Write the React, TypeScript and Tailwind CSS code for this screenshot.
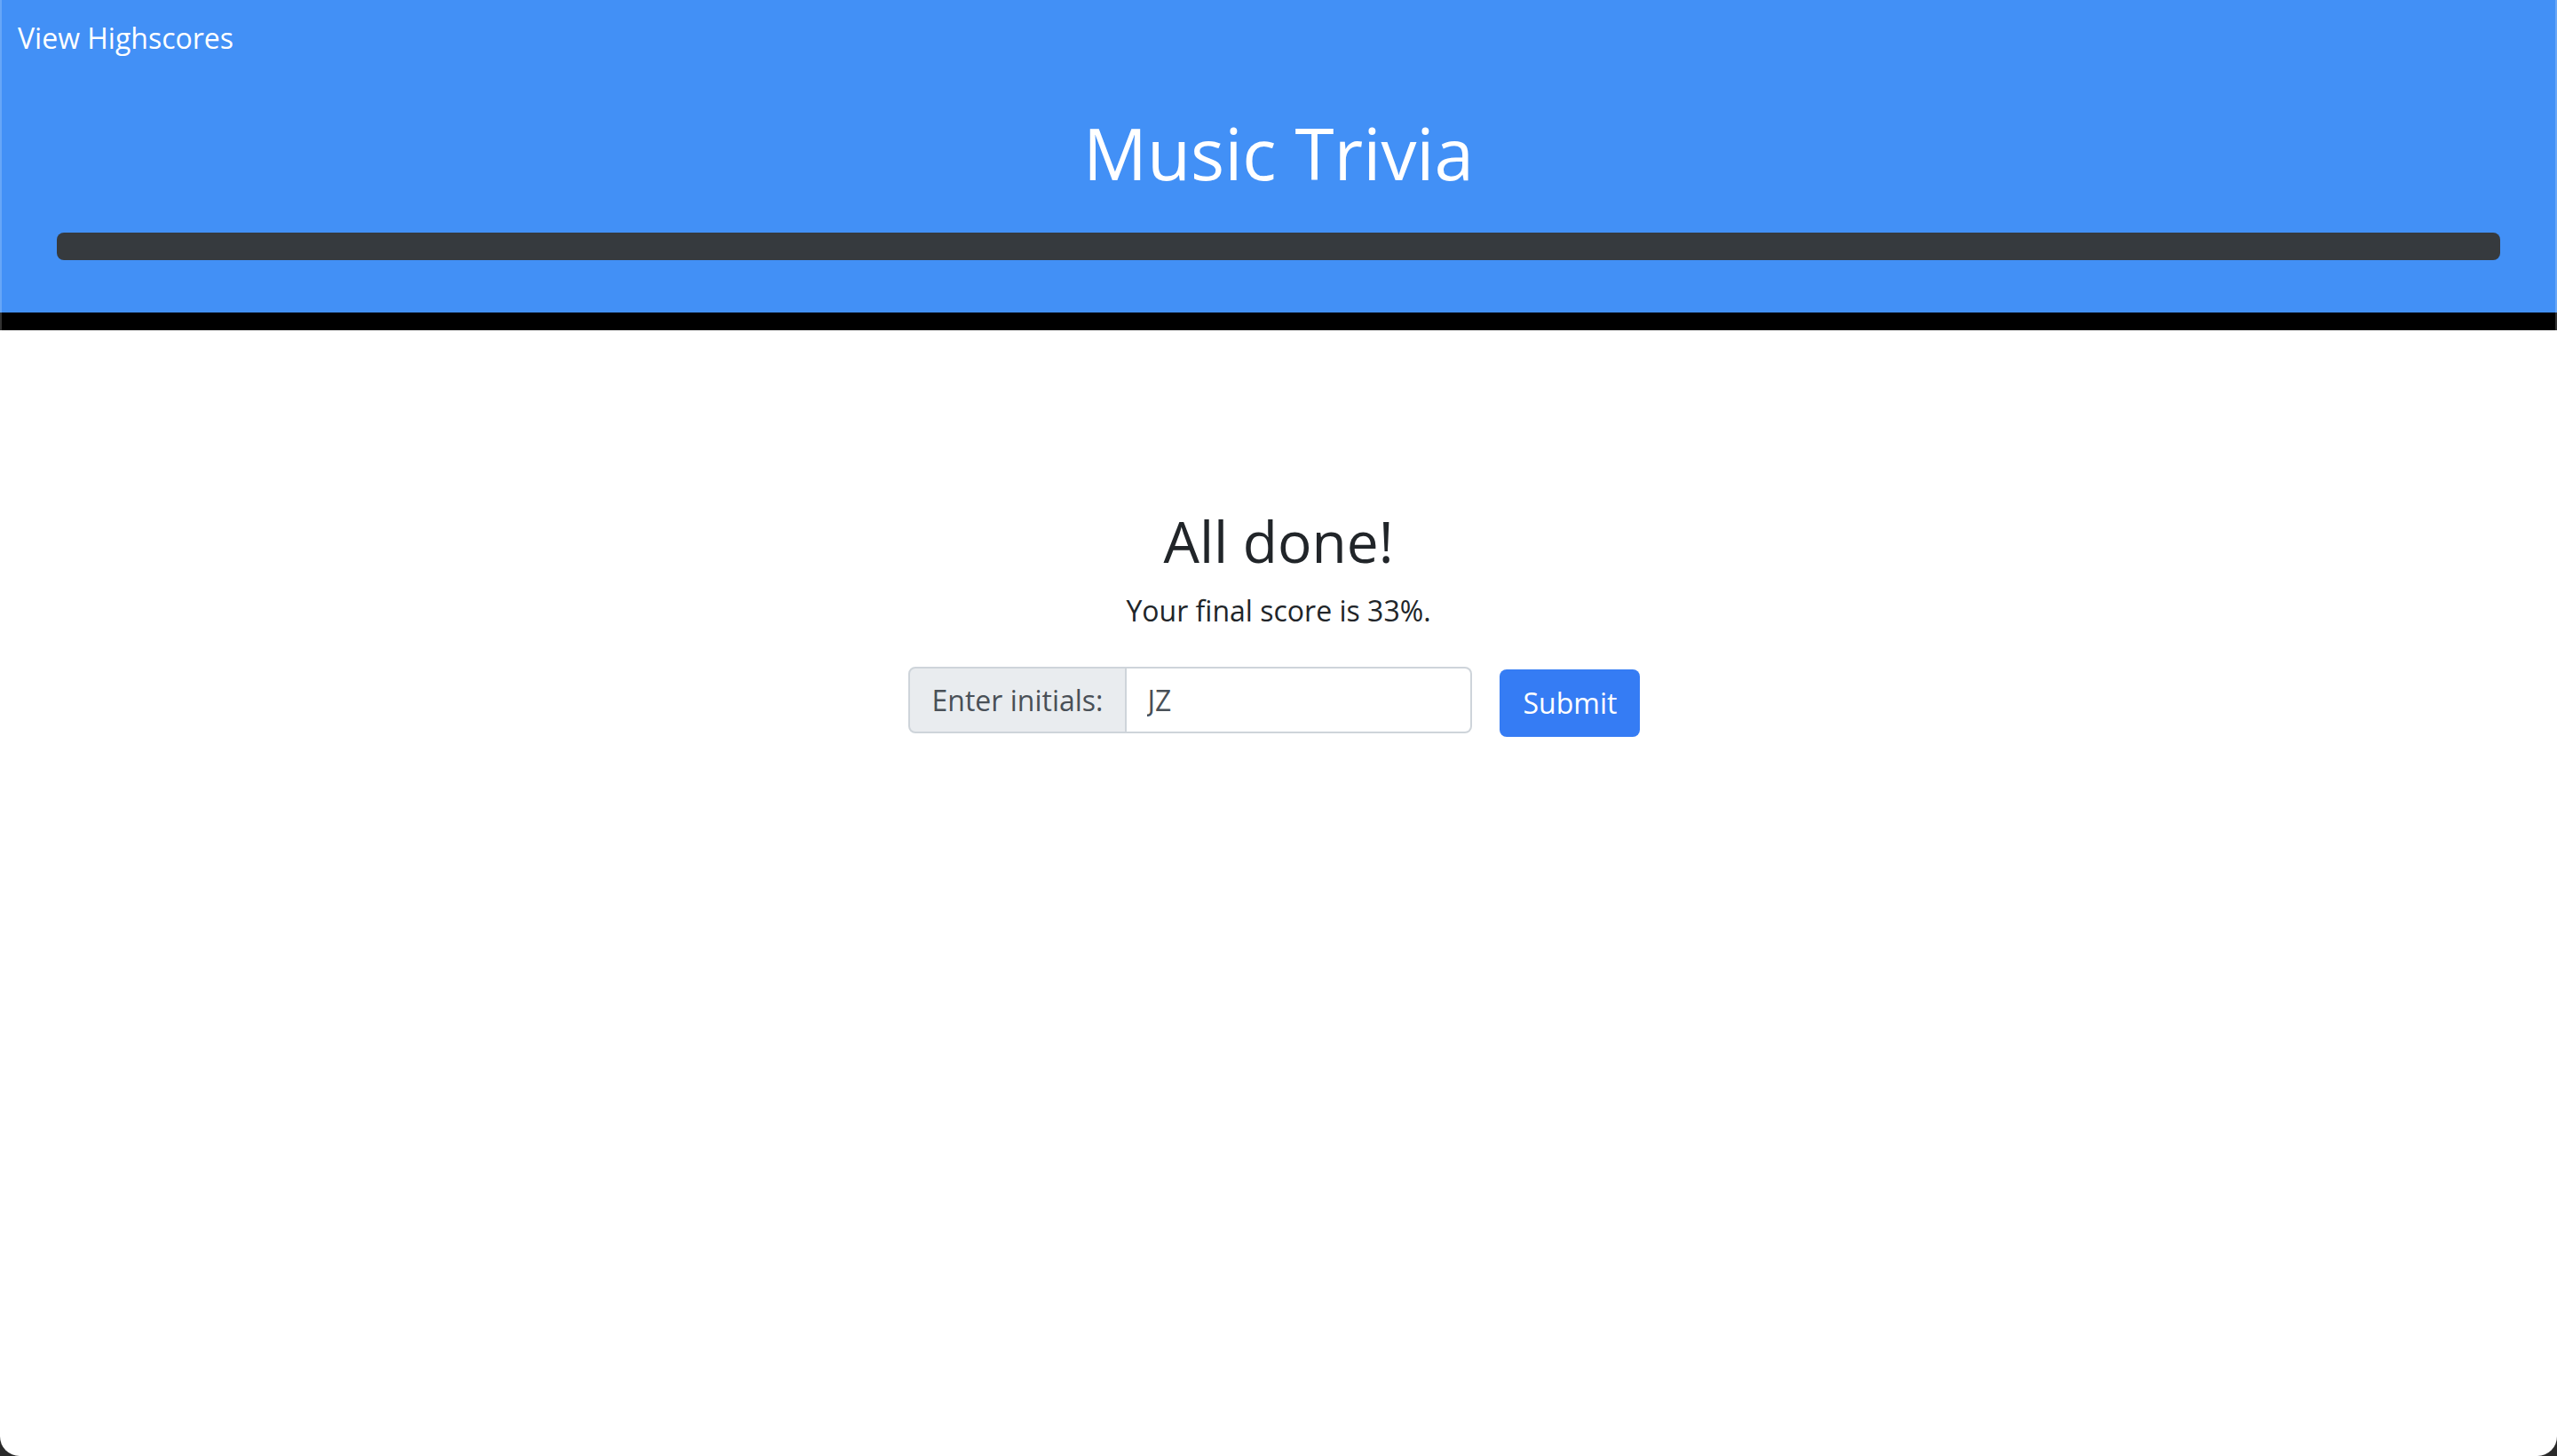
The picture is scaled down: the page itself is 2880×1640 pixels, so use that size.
export default function App() {
  return (
    <div className="h-[1640px] w-full bg-[#2a2a2a] font-['Open_Sans',sans-serif]">
      <div className="flex h-full flex-col overflow-hidden rounded-b-[22px] bg-white">
        <header className="border-x-2 border-white/20 bg-[#4290f6] pb-[59px]">
          <nav className="pl-[18px] pt-[19px]">
            <a href="#" className="block text-[32px] leading-[48px] text-white">
              View Highscores
            </a>
          </nav>
          <h1 className="mt-[57px] text-center text-[80px] font-normal leading-[96px] text-white">Music Trivia</h1>
          <div className="mt-[42px] px-[62px]">
            <div className="h-[31px] w-full rounded-[8px] bg-[#363a3e]" />
          </div>
        </header>
        <div className="h-[20px] border-x-2 border-white/20 bg-black" />

        <main className="flex flex-col items-center text-[#212529]">
          <h2 className="mt-[199px] text-[64px] font-medium leading-[77px]">All done!</h2>
          <p className="mt-[16px] text-[32px] leading-[48px]">Your final score is 33%.</p>

          <form className="mr-[10px] mt-[39px] flex items-start" onSubmit={(e) => e.preventDefault()}>
            <div className="flex h-[75px]">
              <span className="flex items-center rounded-l-[8px] border-2 border-[#ced4da] bg-[#e9ecef] px-[25px] text-[32px] text-[#495057]">
                Enter initials:
              </span>
              <input
                defaultValue="JZ"
                className="w-[389px] rounded-r-[8px] border-2 border-l-0 border-[#ced4da] bg-white px-[23px] text-[32px] text-[#495057] outline-none"
              />
            </div>
            <button
              type="submit"
              className="ml-[31px] mt-[3px] h-[76px] w-[158px] rounded-[8px] bg-[#357cf4] text-[32px] text-white"
            >
              Submit
            </button>
          </form>
        </main>
      </div>
    </div>
  );
}
